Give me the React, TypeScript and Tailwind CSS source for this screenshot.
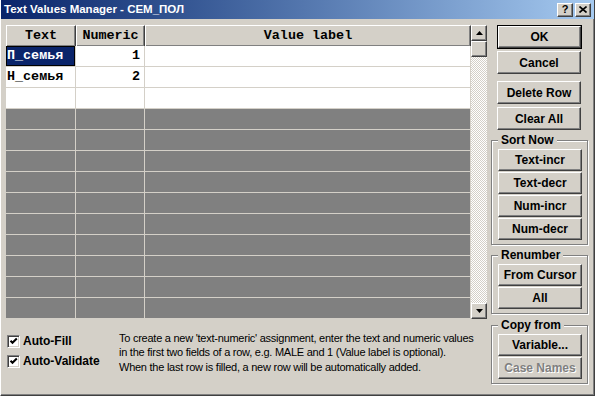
import type { ReactNode } from 'react';

const RAISED =
  'border border-t-white border-l-white border-r-[#404040] border-b-[#404040] shadow-[inset_-1px_-1px_0_#808080] bg-[#d4d0c8]';

const ROWS = [
  { text: 'П_семья', num: '1', white: true, sel: true },
  { text: 'Н_семья', num: '2', white: true },
  { text: '', num: '', white: true },
  ...Array.from({ length: 10 }, () => ({ text: '', num: '', white: false })),
];

const Btn = ({
  children,
  isDefault,
  disabled,
  className = '',
}: {
  children: ReactNode;
  isDefault?: boolean;
  disabled?: boolean;
  className?: string;
}) => {
  const label = (
    <div
      className={`${RAISED} flex h-full w-full items-center justify-center text-[12px] font-bold ${
        disabled ? 'text-[#808080] [text-shadow:1px_1px_0_#fff]' : 'text-black'
      }`}
    >
      {children}
    </div>
  );
  if (isDefault) {
    return <div className={`border border-black ${className}`}>{label}</div>;
  }
  return <div className={className}>{label}</div>;
};

const Group = ({ title, className = '', children }: { title: string; className?: string; children: ReactNode }) => (
  <div
    className={`relative border border-[#808080] px-[6px] pt-[8px] pb-[4px] shadow-[1px_1px_0_#fff,inset_1px_1px_0_#fff] ${className}`}
  >
    <span className="absolute -top-[8px] left-[6px] bg-[#d4d0c8] px-[3px] text-[12px] leading-[14px] font-bold text-black">
      {title}
    </span>
    <div className="flex flex-col gap-[1px]">{children}</div>
  </div>
);

const Arrow = ({ down }: { down?: boolean }) => (
  <div className={`${RAISED} flex h-[16px] w-[16px] items-center justify-center`}>
    <svg width="7" height="4" viewBox="0 0 7 4">
      <polygon points={down ? '0,0 7,0 3.5,4' : '0,4 7,4 3.5,0'} fill="#000" />
    </svg>
  </div>
);

const Check = ({ label }: { label: string }) => (
  <div className="flex h-[13px] items-center gap-[3px]">
    <div className="flex h-[13px] w-[13px] shrink-0 items-center justify-center border border-t-[#808080] border-l-[#808080] border-r-white border-b-white bg-white shadow-[inset_1px_1px_0_#404040,inset_-1px_-1px_0_#d4d0c8]">
      <svg width="9" height="9" viewBox="0 0 9 9">
        <path d="M1.5 3.8 L3.5 5.8 L7.8 1.5" stroke="#000" strokeWidth="2" fill="none" />
      </svg>
    </div>
    <span className="text-[12px] leading-[13px] font-bold text-black">{label}</span>
  </div>
);

export default function App() {
  return (
    <div className="h-[396px] w-[595px] overflow-hidden bg-[#d4d0c8] font-['Liberation_Sans',Arial,sans-serif] select-none">
      <div className="flex h-[396px] flex-col border-r border-b border-r-[#404040] border-b-[#404040] border-l border-l-white shadow-[inset_-1px_-1px_0_#808080]">
        {/* caption */}
        <div className="flex h-[19px] items-center bg-gradient-to-r from-[#0a246a] to-[#a6caf0] pr-[3px] pl-[3px]">
          <span className="flex-1 text-[11.5px] font-bold text-white">Text Values Manager - СЕМ_ПОЛ</span>
          <div className={`${RAISED} flex h-[14px] w-[16px] items-center justify-center text-[11px] leading-none font-bold`}>?</div>
          <div className={`${RAISED} ml-[2px] flex h-[14px] w-[16px] items-center justify-center`}>
            <svg width="8" height="7" viewBox="0 0 8 7">
              <path d="M0.5 0.5 L7.5 6.5 M7.5 0.5 L0.5 6.5" stroke="#000" strokeWidth="1.6" />
            </svg>
          </div>
        </div>

        <div className="flex pt-[6px] pl-[5px]">
          {/* left side */}
          <div className="flex w-[481px] flex-col">
            <div className="flex h-[294px]">
              <div className="flex w-[465px] flex-col font-['Liberation_Mono',monospace] text-[13.4px] font-bold">
                <div className="grid h-[21px] grid-cols-[70px_69px_326px]">
                  {['Text', 'Numeric', 'Value label'].map((h) => (
                    <div key={h} className={`${RAISED} flex items-center justify-center text-black`}>
                      {h}
                    </div>
                  ))}
                </div>
                {ROWS.map((row, i) => (
                  <div key={i} className="grid h-[21px] grid-cols-[70px_69px_326px]">
                    <div
                      className={`flex items-center border-r border-b border-[#d4d0c8] pl-[1px] ${
                        row.sel
                          ? 'bg-[#0a246a] text-white shadow-[inset_0_0_0_1px_#000]'
                          : row.white
                            ? 'bg-white text-black'
                            : 'bg-[#808080]'
                      }`}
                    >
                      {row.text}
                    </div>
                    <div
                      className={`flex items-center justify-end border-r border-b border-[#d4d0c8] pr-[4px] text-black ${
                        row.white ? 'bg-white' : 'bg-[#808080]'
                      }`}
                    >
                      {row.num}
                    </div>
                    <div
                      className={`border-r border-b border-[#d4d0c8] ${row.white ? 'bg-white' : 'bg-[#808080]'}`}
                    />
                  </div>
                ))}
              </div>
              <div className="flex w-[16px] flex-col">
                <Arrow />
                <div className={`${RAISED} h-[16px] w-[16px]`} />
                <div className="flex-1 bg-[repeating-conic-gradient(#fff_0%_25%,#d4d0c8_0%_50%)] bg-[length:2px_2px]" />
                <Arrow down />
              </div>
            </div>

            <div className="flex pt-[16px]">
              <div className="flex w-[113px] flex-col gap-[7px] pl-[1px]">
                <Check label="Auto-Fill" />
                <Check label="Auto-Validate" />
              </div>
              <div className="text-[11px] leading-[14px] tracking-[-0.25px] text-black">
                <p className="-mt-[4px]">
                  To create a new 'text-numeric' assignment, enter the text and numeric values
                  <br />
                  in the first two fields of a row, e.g. MALE and 1 (Value label is optional).
                </p>
                <p className="mt-[1px]">When the last row is filled, a new row will be automatically added.</p>
              </div>
            </div>
          </div>

          {/* right side */}
          <div className="ml-[4px] flex w-[97px] flex-col">
            <div className="flex flex-col px-[6px]">
              <Btn isDefault className="h-[24px] w-[85px]">OK</Btn>
              <Btn className="mt-[2px] h-[23px] w-[84px]">Cancel</Btn>
              <Btn className="mt-[7px] h-[23px] w-[84px]">Delete Row</Btn>
              <Btn className="mt-[3px] h-[23px] w-[84px]">Clear All</Btn>
            </div>
            <Group title="Sort Now" className="mt-[10px]">
              <Btn className="h-[22px] w-[84px]">Text-incr</Btn>
              <Btn className="h-[22px] w-[84px]">Text-decr</Btn>
              <Btn className="h-[22px] w-[84px]">Num-incr</Btn>
              <Btn className="h-[22px] w-[84px]">Num-decr</Btn>
            </Group>
            <Group title="Renumber" className="mt-[10px]">
              <Btn className="h-[22px] w-[84px]">From Cursor</Btn>
              <Btn className="h-[22px] w-[84px]">All</Btn>
            </Group>
            <Group title="Copy from" className="mt-[11px]">
              <Btn className="h-[22px] w-[84px]">Variable...</Btn>
              <Btn disabled className="h-[22px] w-[84px]">Case Names</Btn>
            </Group>
          </div>
        </div>
      </div>
    </div>
  );
}
